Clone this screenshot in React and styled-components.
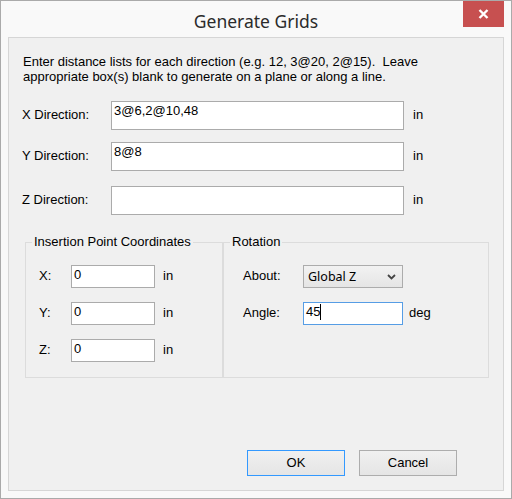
import React from 'react';
import styled, { createGlobalStyle } from 'styled-components';

const GlobalStyle = createGlobalStyle`
  html, body {
    margin: 0;
    padding: 0;
    background: #ffffff;
  }
  * {
    box-sizing: border-box;
  }
`;

const ui = `"Liberation Sans", Arial, sans-serif`;
const segoe = `"Noto Sans", "Open Sans", sans-serif`;

const Window = styled.div`
  position: relative;
  width: 512px;
  height: 499px;
  border: 1px solid #aaaaaa;
  background: #f9f9f9;
  display: flex;
  flex-direction: column;
  font-family: ${ui};
  font-size: 13px;
  color: #000;
`;

const TitleBar = styled.div`
  height: 36px;
  display: flex;
  align-items: center;
  justify-content: center;
  padding-top: 3px;
  font-family: ${segoe};
  font-size: 17.5px;
  color: #2b2b2b;
`;

const CloseButton = styled.div`
  position: absolute;
  top: 0;
  right: 7px;
  width: 41px;
  height: 26px;
  background: #c75050;
  display: flex;
  align-items: center;
  justify-content: center;
`;

const Client = styled.div`
  height: 454px;
  margin: 0 7px 7px;
  border: 1px solid #d6d6d6;
  background: #f0f0f0;
  display: flex;
  flex-direction: column;
  padding: 16px 0 14px 13px;
`;

const Intro = styled.p`
  margin: 0 0 0 1px;
  line-height: 15px;
`;

const FieldRow = styled.div`
  display: grid;
  grid-template-columns: ${p => p.$label}px ${p => p.$input}px auto;
  align-items: center;
  margin-top: ${p => p.$top || 0}px;
`;

const Label = styled.span`
  line-height: 15px;
  margin-top: -2px;
`;

const Unit = styled.span`
  line-height: 15px;
  margin-top: -2px;
  margin-left: ${p => p.$gap}px;
`;

const TextBox = styled.div`
  height: ${p => p.$h}px;
  background: #fff;
  border: 1px solid ${p => (p.$focus ? '#569de5' : '#ababab')};
  padding: 1px 2px;
  line-height: 15px;
  white-space: nowrap;
  overflow: hidden;
`;

const Caret = styled.span`
  display: inline-block;
  width: 1px;
  height: 16px;
  background: #000;
  vertical-align: -4px;
`;

const Groups = styled.div`
  display: flex;
  margin: 20px 0 0 3px;
`;

const Group = styled.fieldset`
  width: ${p => p.$w}px;
  height: 143px;
  margin: 0;
  padding: 16px 0 0 ${p => p.$pad}px;
  border: 1px solid #dcdcdc;
  display: grid;
  grid-auto-rows: 23px;
  row-gap: 14px;
  align-content: start;
`;

const Legend = styled.legend`
  margin-left: ${p => 6 - p.$pad}px;
  padding: 0 2px;
  line-height: 14px;
`;

const Select = styled.div`
  height: 23px;
  border: 1px solid #acacac;
  background: linear-gradient(#f2f2f2, #e5e5e5);
  display: flex;
  align-items: center;
  justify-content: space-between;
  padding: 0 6px 0 4px;
  font-family: ${segoe};
  font-size: 12.5px;
  color: #000;
`;

const Spacer = styled.div`
  flex: 1;
`;

const ButtonBar = styled.div`
  display: flex;
  justify-content: flex-end;
  gap: 14px;
  margin-right: 46px;
`;

const Button = styled.div`
  width: 98px;
  height: 26px;
  border: 1px solid ${p => (p.$default ? '#3399ff' : '#adadad')};
  background: linear-gradient(#f0f0f0, #e5e5e5);
  display: flex;
  align-items: center;
  justify-content: center;
  padding-bottom: 1px;
`;

const directions = [
  { label: 'X Direction:', value: '3@6,2@10,48', top: 17 },
  { label: 'Y Direction:', value: '8@8', top: 12 },
  { label: 'Z Direction:', value: '', top: 15 },
];

const points = ['X:', 'Y:', 'Z:'];

const App = () => (
  <>
    <GlobalStyle />
    <Window>
      <TitleBar>Generate Grids</TitleBar>
      <CloseButton>
        <svg width="11" height="10" viewBox="0 0 11 10">
          <path d="M1.5 1 L9.5 9 M9.5 1 L1.5 9" stroke="#fff" strokeWidth="2.4" />
        </svg>
      </CloseButton>
      <Client>
        <Intro>
          Enter distance lists for each direction (e.g. 12, 3@20, 2@15).&nbsp; Leave
          <br />
          appropriate box(s) blank to generate on a plane or along a line.
        </Intro>

        {directions.map(d => (
          <FieldRow key={d.label} $label={89} $input={293} $top={d.top}>
            <Label>{d.label}</Label>
            <TextBox $h={29}>{d.value}</TextBox>
            <Unit $gap={9}>in</Unit>
          </FieldRow>
        ))}

        <Groups>
          <Group $w={198} $pad={13}>
            <Legend $pad={13}>Insertion Point Coordinates</Legend>
            {points.map(p => (
              <FieldRow key={p} $label={32} $input={84}>
                <Label>{p}</Label>
                <TextBox $h={23}>0</TextBox>
                <Unit $gap={8}>in</Unit>
              </FieldRow>
            ))}
          </Group>
          <Group $w={266} $pad={19}>
            <Legend $pad={19}>Rotation</Legend>
            <FieldRow $label={60} $input={100}>
              <Label>About:</Label>
              <Select>
                Global Z
                <svg width="9" height="6" viewBox="0 0 9 6">
                  <path d="M1 1 L4.5 4.5 L8 1" fill="none" stroke="#444" strokeWidth="1.8" />
                </svg>
              </Select>
              <span />
            </FieldRow>
            <FieldRow $label={60} $input={100}>
              <Label>Angle:</Label>
              <TextBox $h={23} $focus>
                45<Caret />
              </TextBox>
              <Unit $gap={6}>deg</Unit>
            </FieldRow>
          </Group>
        </Groups>

        <Spacer />
        <ButtonBar>
          <Button $default>OK</Button>
          <Button>Cancel</Button>
        </ButtonBar>
      </Client>
    </Window>
  </>
);

export default App;
